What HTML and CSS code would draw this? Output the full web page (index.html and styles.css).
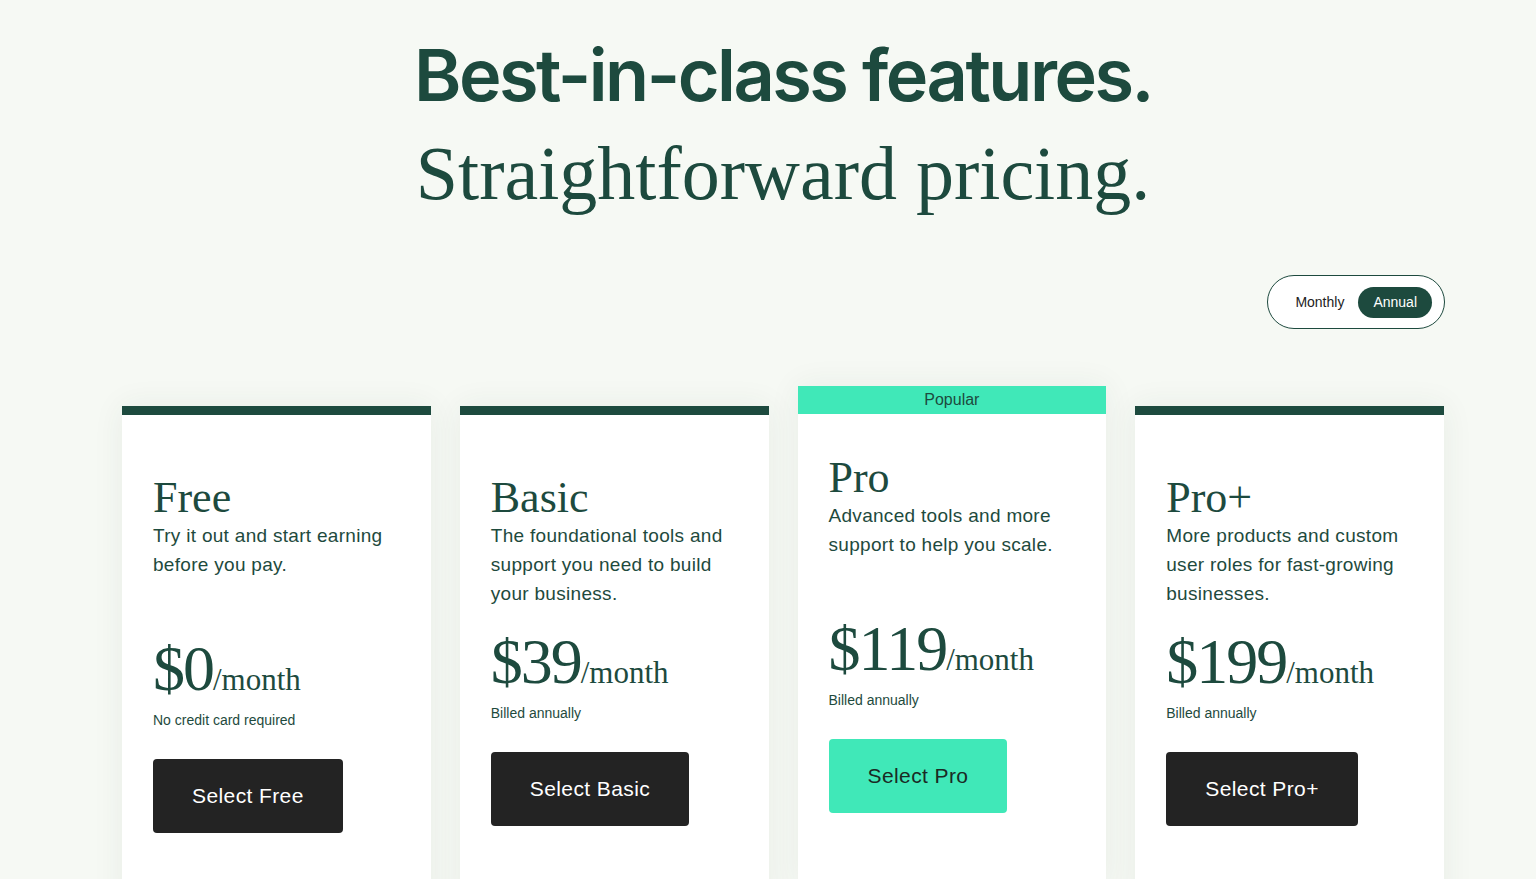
FILE: index.html
```html
<!DOCTYPE html>
<html lang="en">
<head>
<meta charset="utf-8">
<title>Pricing</title>
<link rel="stylesheet" href="styles.css">
</head>
<body>
<main class="page">
  <header class="hero">
    <h1 class="hero-title">Best-in-class features.</h1>
    <p class="hero-sub">Straightforward pricing.</p>
  </header>

  <div class="toggle-row">
    <div class="toggle">
      <span class="toggle-opt">Monthly</span>
      <span class="toggle-opt is-active">Annual</span>
    </div>
  </div>

  <section class="plans">
    <article class="plan">
      <div class="plan-bar"></div>
      <div class="plan-body">
        <h2 class="plan-name">Free</h2>
        <p class="plan-desc desc-short">Try it out and start earning before you pay.</p>
        <div class="plan-price"><span class="amount">$0</span><span class="per">/month</span></div>
        <p class="plan-note">No credit card required</p>
        <a class="btn btn-dark">Select Free</a>
      </div>
    </article>

    <article class="plan">
      <div class="plan-bar"></div>
      <div class="plan-body">
        <h2 class="plan-name">Basic</h2>
        <p class="plan-desc">The foundational tools and support you need to build your business.</p>
        <div class="plan-price"><span class="amount">$39</span><span class="per">/month</span></div>
        <p class="plan-note">Billed annually</p>
        <a class="btn btn-dark">Select Basic</a>
      </div>
    </article>

    <article class="plan plan-popular">
      <div class="plan-bar bar-popular">Popular</div>
      <div class="plan-body">
        <h2 class="plan-name">Pro</h2>
        <p class="plan-desc desc-short">Advanced tools and more support to help you scale.</p>
        <div class="plan-price"><span class="amount">$119</span><span class="per">/month</span></div>
        <p class="plan-note">Billed annually</p>
        <a class="btn btn-mint">Select Pro</a>
      </div>
    </article>

    <article class="plan">
      <div class="plan-bar"></div>
      <div class="plan-body">
        <h2 class="plan-name">Pro+</h2>
        <p class="plan-desc">More products and custom user roles for fast-growing businesses.</p>
        <div class="plan-price"><span class="amount">$199</span><span class="per">/month</span></div>
        <p class="plan-note">Billed annually</p>
        <a class="btn btn-dark">Select Pro+</a>
      </div>
    </article>
  </section>
</main>
</body>
</html>
```

FILE: styles.css
```css
* { box-sizing: border-box; }
html, body { margin: 0; padding: 0; }
body {
  background: #f6f9f4;
  color: #1e4a3d;
  font-family: "Liberation Sans", Arial, sans-serif;
  overflow: hidden;
  height: 879px;
}
.page {
  width: 1322px;
  margin-left: 122px;
}
.hero {
  text-align: center;
  padding-top: 30px;
}
.hero-title {
  margin: 0;
  font-family: Inter, sans-serif;
  font-weight: 600;
  font-size: 72px;
  line-height: 90px;
  letter-spacing: -2.5px;
  color: #1d4a3e;
}
.hero-sub {
  margin: 8px 0 0;
  font-family: "Liberation Serif", serif;
  font-weight: 400;
  font-size: 76px;
  line-height: 90px;
  color: #1d4a3e;
}
.toggle-row {
  display: flex;
  justify-content: flex-end;
  margin-top: 57px;
}
.toggle {
  display: flex;
  align-items: center;
  gap: 14px;
  height: 54px;
  margin-right: -1px;
  padding: 0 12px 0 27px;
  border: 1.5px solid #1d4a3e;
  border-radius: 27px;
  background: #fff;
}
.toggle-opt {
  font-size: 14px;
  color: #222;
}
.toggle-opt.is-active {
  background: #1d4a3e;
  color: #fff;
  height: 31px;
  line-height: 31px;
  padding: 0 15px;
  border-radius: 16px;
}
.plans {
  display: grid;
  grid-template-columns: repeat(4, 1fr);
  column-gap: 29px;
  margin-top: 57px;
  align-items: start;
}
.plan {
  background: #fff;
  margin-top: 20px;
  height: 500px;
  box-shadow: 0 0 30px rgba(40, 70, 50, 0.07);
}
.plan-popular { margin-top: 0; }
.plan-bar {
  height: 9px;
  background: #1d4a3e;
}
.bar-popular {
  height: 28px;
  background: #40e8b8;
  color: #1d4a3e;
  font-size: 16px;
  text-align: center;
  line-height: 28px;
}
.plan-body {
  padding: 59px 31px 0;
}
.plan-popular .plan-body { padding-top: 40px; }
.plan-name {
  margin: 0;
  font-family: "Liberation Serif", serif;
  font-weight: 400;
  font-size: 44px;
  line-height: 47px;
  color: #1d4a3e;
}
.plan-desc {
  margin: 0;
  font-size: 19px;
  letter-spacing: 0.3px;
  line-height: 29px;
  min-height: 87px;
  color: #1e4a3d;
}
.plan-desc.desc-short { min-height: 94px; }
.plan-price {
  margin-top: 29px;
  font-family: "Liberation Serif", serif;
  color: #1d4a3e;
  line-height: 50px;
  white-space: nowrap;
}
.amount {
  font-size: 64px;
  letter-spacing: -2px;
}
.per {
  font-size: 31px;
}
.plan-note {
  margin: 1px 0 0;
  font-size: 14px;
  line-height: 18px;
  color: #1e4a3d;
}
.btn {
  display: inline-block;
  margin-top: 30px;
  height: 74px;
  line-height: 74px;
  padding: 0 39px;
  border-radius: 4px;
  font-size: 21px;
  letter-spacing: 0.4px;
  text-decoration: none;
}
.btn-dark { background: #232323; color: #fff; }
.btn-mint { background: #40e8b8; color: #1a2a24; }
```
